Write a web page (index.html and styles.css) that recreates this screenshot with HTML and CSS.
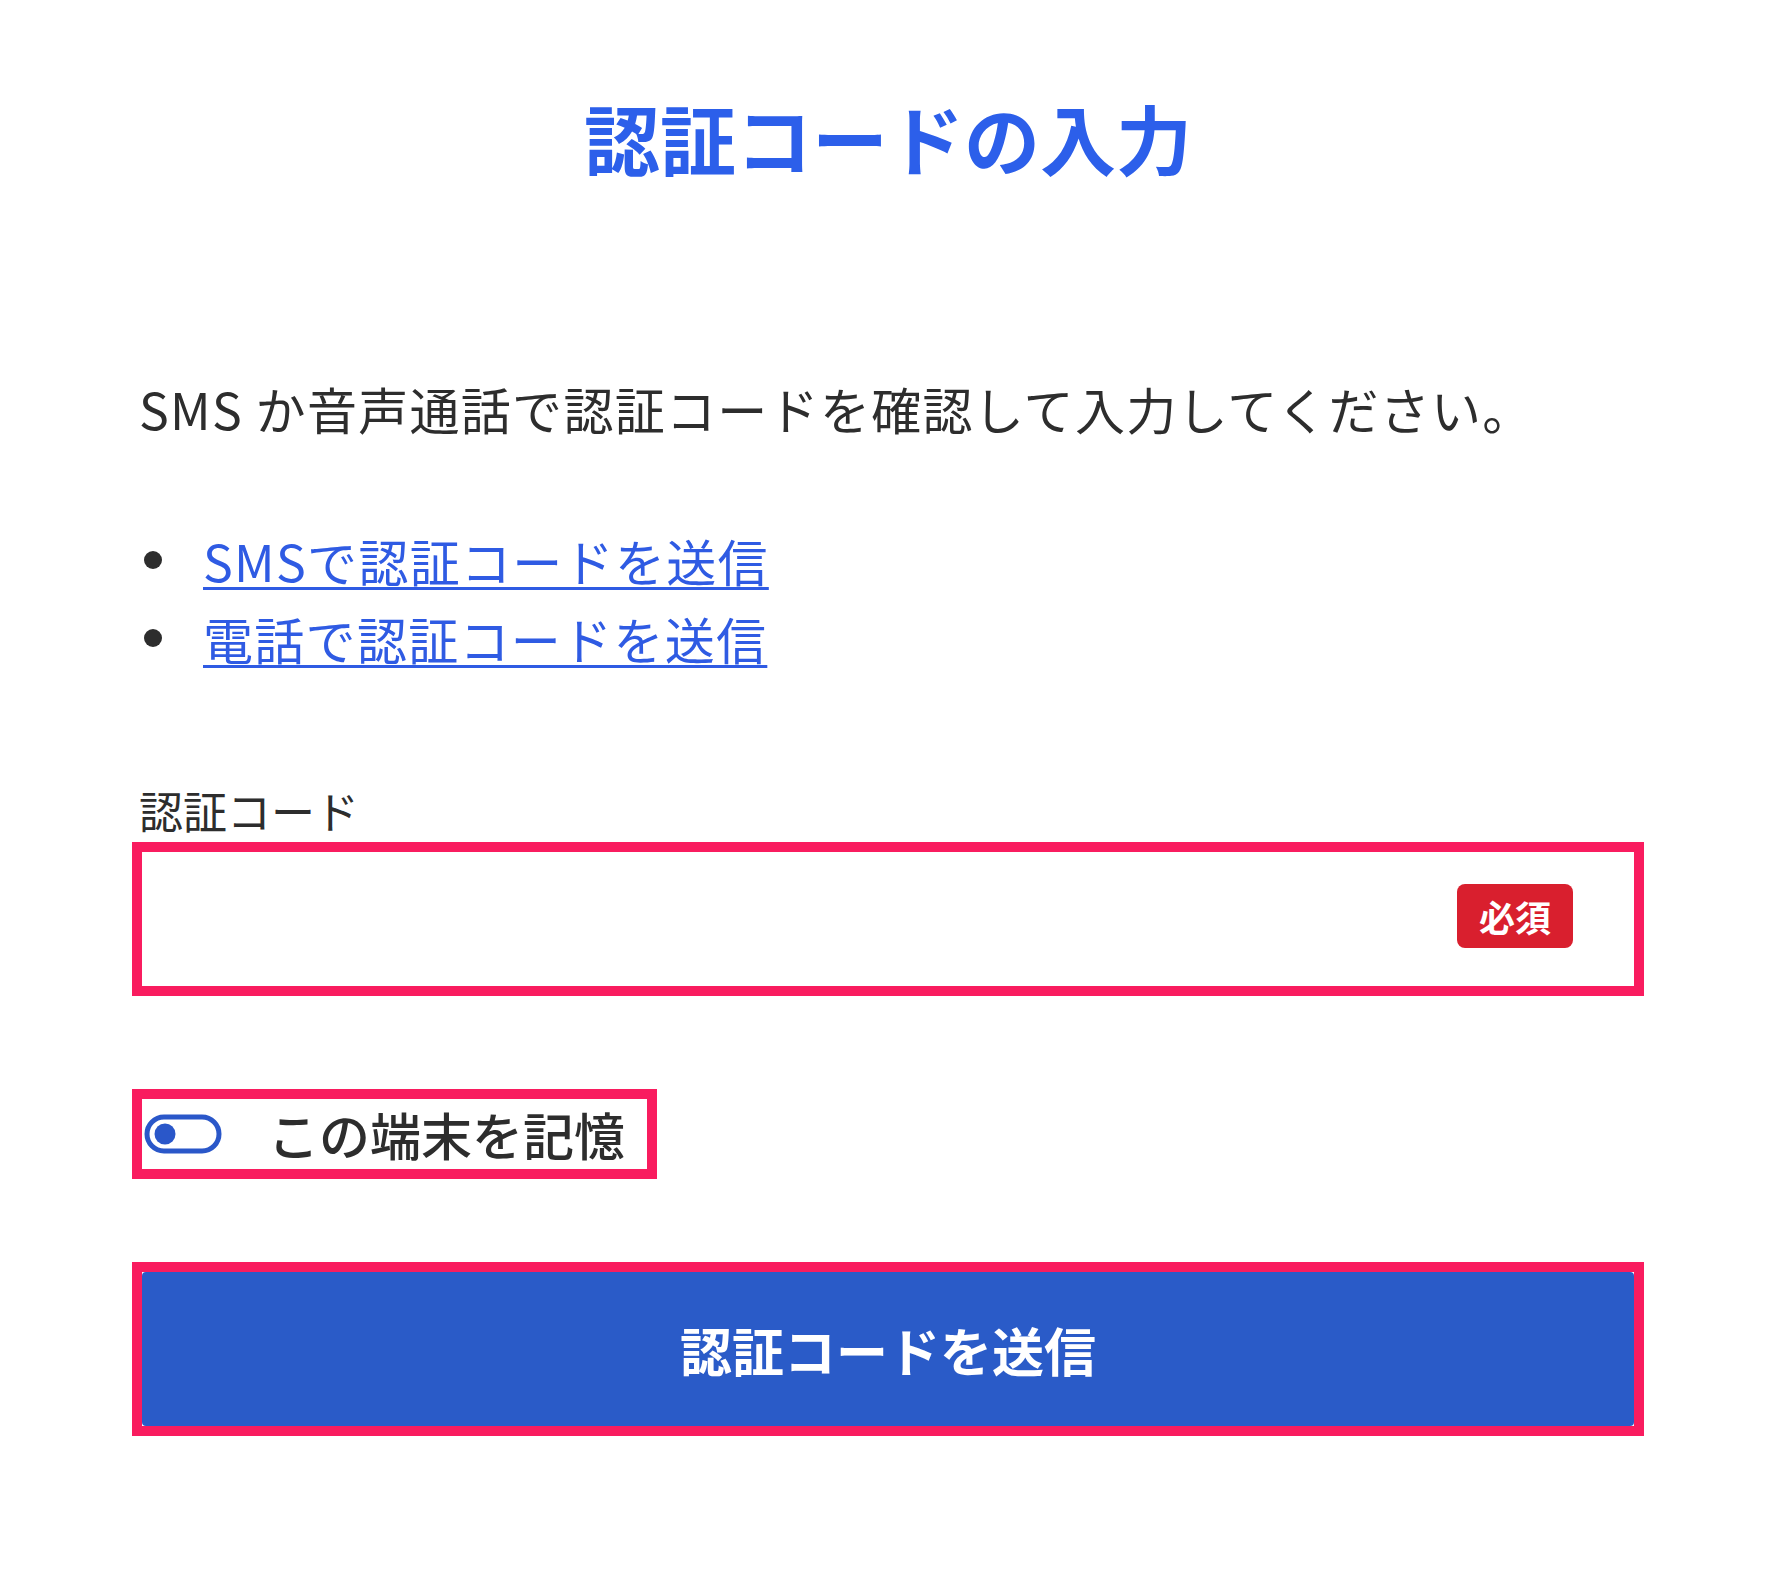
FILE: index.html
```html
<!DOCTYPE html>
<html lang="ja">
<head>
<meta charset="utf-8">
<title>認証コードの入力</title>
<link rel="stylesheet" href="styles.css">
</head>
<body>
<main class="page">
  <h1 class="title">認証コードの入力</h1>
  <p class="lead">SMS か音声通話で認証コードを確認して入力してください。</p>
  <ul class="links">
    <li><a href="#">SMSで認証コードを送信</a></li>
    <li><a href="#">電話で認証コードを送信</a></li>
  </ul>
  <label class="field-label" for="code">認証コード</label>
  <div class="field mark">
    <input id="code" class="field-input" type="text">
    <span class="badge">必須</span>
  </div>
  <div class="remember-wrap">
    <label class="remember mark">
      <svg class="toggle" viewBox="0 0 78 40" aria-hidden="true">
        <rect x="3" y="3" width="72" height="34" rx="17" fill="none" stroke="#2a57c9" stroke-width="5"/>
        <circle cx="21" cy="20" r="10.5" fill="#2a57c9"/>
      </svg>
      <span class="remember-text">この端末を記憶</span>
    </label>
  </div>
  <div class="submit-wrap mark">
    <button class="submit" type="button">認証コードを送信</button>
  </div>
</main>
</body>
</html>
```
FILE: styles.css
```css
html, body {
  margin: 0;
  padding: 0;
  background: #ffffff;
}

body {
  font-family: "Noto Sans CJK JP", "Noto Sans", sans-serif;
  color: #2d2d2d;
}

.page {
  width: 1492px;
  margin: 0 auto;
  padding-top: 80px;
  padding-bottom: 130px;
  display: flex;
  flex-direction: column;
}

.title {
  margin: 0;
  font-size: 76px;
  line-height: 114px;
  font-weight: 700;
  color: #2c5fea;
  text-align: center;
}

.lead {
  margin: 178px 0 0 -3px;
  font-size: 50px;
  line-height: 72px;
  letter-spacing: 1.3px;
  font-weight: 400;
}

.links {
  margin: 77px 0 0;
  padding: 0;
  list-style: none;
}

.links li {
  display: flex;
  align-items: center;
  font-size: 50px;
  line-height: 78px;
  letter-spacing: 1.3px;
}

.links li::before {
  content: "";
  width: 18px;
  height: 18px;
  border-radius: 50%;
  background: #2d2d2d;
  margin-left: 2px;
  margin-right: 41px;
  flex: none;
}

.links a {
  color: #2f5be3;
  text-decoration: underline;
  text-decoration-thickness: 3px;
  text-underline-offset: 5px;
}

.field-label {
  margin: 107px 0 0 -3px;
  font-size: 44px;
  line-height: 52px;
}

.mark {
  outline: 10px solid #f91c5f;
}

.field {
  margin-top: 16px;
  height: 134px;
  display: flex;
  align-items: center;
  background: #fff;
}

.field-input {
  flex: 1;
  height: 100%;
  border: none;
  background: transparent;
  padding: 0 24px;
  font-family: inherit;
  font-size: 44px;
  outline: none;
}

.badge {
  flex: none;
  width: 116px;
  height: 64px;
  margin-right: 61px;
  margin-top: -6px;
  border-radius: 8px;
  background: #d91f2e;
  color: #fff;
  font-size: 36px;
  font-weight: 700;
  line-height: 64px;
  text-align: center;
}

.remember-wrap {
  margin-top: 113px;
  display: flex;
}

.remember {
  display: inline-flex;
  align-items: center;
  height: 70px;
  padding: 0 22px 0 2px;
  gap: 46px;
}

.toggle {
  width: 78px;
  height: 40px;
  flex: none;
}

.remember-text {
  font-size: 51px;
  line-height: 70px;
  font-weight: 500;
  color: #2d2d2d;
}

.submit-wrap {
  margin-top: 103px;
  display: flex;
}

.submit {
  flex: 1;
  height: 154px;
  border: none;
  border-radius: 4px;
  background: #2a5bc8;
  color: #fff;
  font-family: inherit;
  font-size: 52px;
  font-weight: 700;
  cursor: pointer;
}
```
